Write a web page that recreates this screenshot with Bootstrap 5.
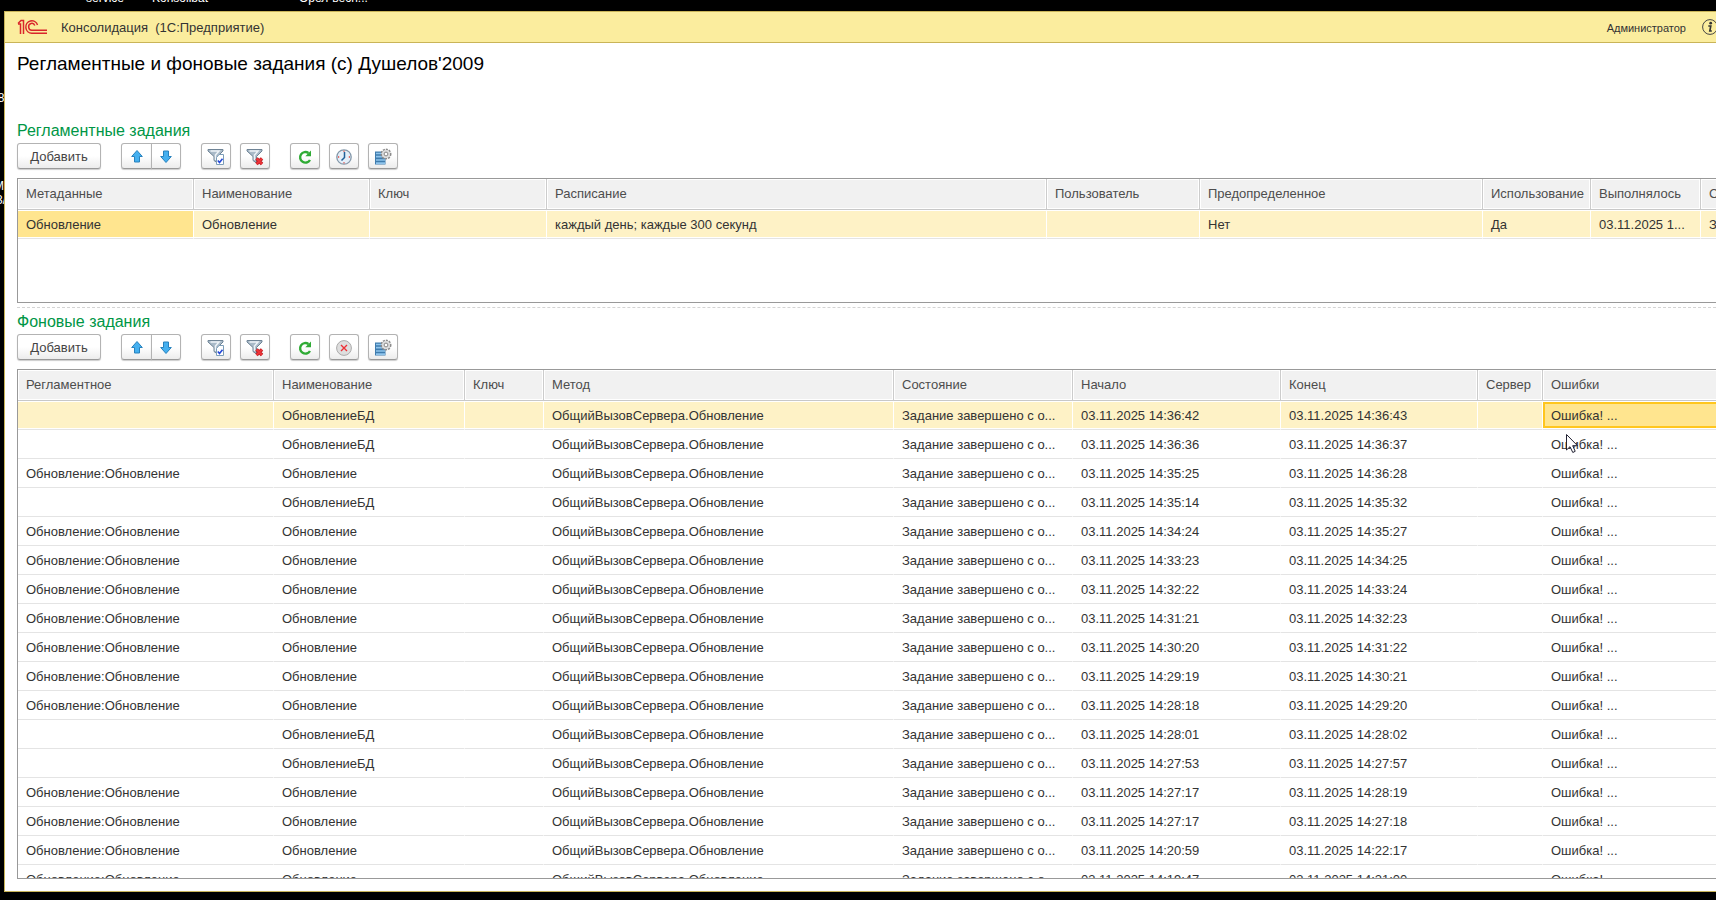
<!DOCTYPE html>
<html lang="ru">
<head>
<meta charset="utf-8">
<meta name="viewport" content="width=device-width, initial-scale=1">
<title>Консолидация (1С:Предприятие)</title>
<link href="https://cdn.jsdelivr.net/npm/bootstrap@5.3.0/dist/css/bootstrap.min.css" rel="stylesheet">
<style>
body{background:#000;font:13px/18px "Liberation Sans",Arial,sans-serif;color:#333;padding:11px 0 8px 4px}
.desk-label{position:absolute;color:#fff;font-size:12px;line-height:14px;white-space:nowrap}
.app-window{background:#fff;border:1px solid #c9b458;border-right:0;position:relative}
.titlebar{background:#fbed9e;border-bottom:1px solid #c9b458;height:31px;padding-left:12px;white-space:pre}
.app-name,.user-link{padding-top:2px}
.user-link{font-size:11px;color:#333;text-decoration:none}
.app-logo{margin-right:14px}
.info-btn{margin-right:-2px}
.workarea{padding:9px 0 12px 12px}
.form-title{font-size:19px;line-height:24px;font-weight:400;color:#000;margin:0 0 45px}
.group-title{font-size:16px;line-height:20px;font-weight:400;color:#009646;margin:0 0 2px}
.toolbar{margin-bottom:9px}
.tool{height:26px;width:30px;padding:1px 0 0;border:1px solid #b3b3b3;border-bottom-color:#999;border-radius:3px;background:linear-gradient(#fff 50%,#ececec);box-shadow:0 1px 1px #ccc;font-size:13px;line-height:18px;color:#444;display:inline-flex;align-items:center;justify-content:center}
.tool:hover,.tool:active{background:#f4f4f4!important;border-color:#999!important}
.tool-add{width:84px}
.btn-group .tool:first-child{width:31px}
.gap-tool{margin-left:9px}
.gap-group{margin-left:20px}
.grid-box{border:1px solid #999;border-right:0;overflow:hidden}
.grid-upper{height:125px}
.grid{table-layout:fixed;width:100%;border-collapse:separate;border-spacing:0;margin:0}
.grid th,.grid td{padding:2px 0 0 8px;white-space:nowrap;overflow:hidden;vertical-align:middle}
.grid th{height:31px;font-weight:400;color:#4d4d4d;background:#f1f1f1;border-right:1px solid #ccc;border-bottom:1px solid #c8c8c8;box-shadow:inset 0 0 0 1px #fff;padding-top:0}
.grid td{height:29px;border-bottom:1px solid #e4e4e4;border-right:1px solid #fff}
.grid th:last-child,.grid td:last-child{border-right:0}
.grid th:last-child{box-shadow:inset 1px 1px #fff,inset 0 -1px #fff}
.grid .current td{background:#fef2c6;box-shadow:inset 0 1px #fff,inset 0 -1px #fff}
.grid .current td.picked{background:#ffe58f}
.grid .current td.focused{box-shadow:inset 0 1px #fff,inset 0 -1px #fff,inset 2px 0 #ffc61e,inset 0 3px #ffc61e,inset 0 -3px #ffc61e}
.splitter{border-top:1px dashed #d4d4d4;margin:4px 0}
.pointer{position:absolute;left:1565px;top:433px}
</style>
</head>
<body class="vh-100 overflow-hidden d-flex flex-column position-relative">
<span class="desk-label" style="left:86px;top:-9px">service</span>
<span class="desk-label" style="left:152px;top:-9px">Konsolibat</span>
<span class="desk-label" style="left:299px;top:-9px">Орел-весн!..</span>
<span class="desk-label" style="left:-9px;top:91px">28</span>
<span class="desk-label" style="left:-6px;top:179px">M</span>
<span class="desk-label" style="left:-4px;top:193px">3/</span>

<svg class="d-none" aria-hidden="true">
  <symbol id="i-up" viewBox="0 0 16 16"><path d="M8 1.500 13.300 7.500H10.500V13H5.500V7.500H2.700Z" fill="#44b0f0" stroke="#2781bd"/></symbol>
  <symbol id="i-down" viewBox="0 0 16 16"><path d="M8 13.500 13.300 7.500H10.500V2H5.500V7.500H2.700Z" fill="#44b0f0" stroke="#2781bd"/></symbol>
  <symbol id="i-funnel" viewBox="0 0 18 18"><path d="M1 1.500H16V3L10.500 8.500V15L7 12.500V8.500L1 3Z" fill="#a9bac8" stroke="#6f8496"/><path d="M3.500 3H12L8.500 7V12" fill="none" stroke="#eef3f7" stroke-width="1.500"/></symbol>
  <symbol id="i-filter" viewBox="0 0 18 18"><use href="#i-funnel"/><path d="M9.500 9.500 12 6.500H16.500V16.500H9.500Z" fill="#fff" stroke="#7b9db8"/><path d="M10.800 12.500 12.500 14.500 15.500 10.800" fill="none" stroke="#2548d8" stroke-width="1.600"/></symbol>
  <symbol id="i-nofilter" viewBox="0 0 18 18"><use href="#i-funnel"/><path d="M10.500 10.500 16 16M16 10.500 10.500 16" stroke="#b81f24" stroke-width="3.400"/><path d="M10.500 10.500 16 16M16 10.500 10.500 16" stroke="#ee3338" stroke-width="1.800"/></symbol>
  <symbol id="i-refresh" viewBox="0 0 16 16"><path d="M13 11A5.300 5.300 0 1 1 11.500 4" fill="none" stroke="#2fab35" stroke-width="2.400"/><path d="M14 1.500V7.200H8.300Z" fill="#2fab35"/></symbol>
  <symbol id="i-clock" viewBox="0 0 16 16"><circle cx="8" cy="8" r="7.200" fill="#e4eff9" stroke="#8498aa" stroke-width="1.300"/><path d="M8.500 3V8.500L5.500 11.500" fill="none" stroke="#1f5f99" stroke-width="1.500"/><path d="M7.500 2.300h1M7.500 13.700h1M2 8h1.200M12.800 8h1.200" stroke="#e2473f" stroke-width="1.400"/></symbol>
  <symbol id="i-settings" viewBox="0 0 18 18"><path d="M1 3.500H11.500V16.500H1Z" fill="#3f7cae"/><path d="M2 5.500H11M2 8.700H11M2 12H11M2 15.200H11" stroke="#8fc4ec" stroke-width="1.700"/><circle cx="12" cy="6" r="4.600" fill="#ddd" stroke="#8c8c8c" stroke-width="1.800" stroke-dasharray="2 1"/><circle cx="12" cy="6" r="3.900" fill="#ddd"/><circle cx="12" cy="6" r="1.900" fill="#fff" stroke="#888"/></symbol>
  <symbol id="i-stop" viewBox="0 0 16 16"><circle cx="8" cy="8" r="7.400" fill="#dedede" stroke="#aaa"/><path d="M5 5 11 11M11 5 5 11" stroke="#ed2f35" stroke-width="1.400"/></symbol>
</svg>

<div class="app-window flex-grow-1 d-flex flex-column overflow-hidden">
  <header class="titlebar d-flex align-items-center flex-shrink-0"><svg class="app-logo" width="30" height="16" viewBox="0 0 30 16" role="img" aria-label="1С"><g fill="none" stroke="#d9252b" stroke-width="1.500"><path d="M1 5H3.500V15M1 4.500 4 1.500H6.500V15"/><path d="M20.500 6A6 6.200 0 1 0 15 14.200H30"/><path d="M17.800 6.500A3.200 3.500 0 1 0 15 11.300H30"/></g></svg><span class="app-name">Консолидация  (1С:Предприятие)</span><a href="#" class="user-link ms-auto">Администратор</a><button type="button" class="info-btn btn p-0 border-0 ms-3 d-flex flex-shrink-0" aria-label="О программе"><svg width="16" height="16" viewBox="0 0 16 16"><circle cx="8" cy="8" r="7.400" fill="none" stroke="#444"/><circle cx="8.700" cy="4.200" r="1.400" fill="#333"/><path d="M6.300 7H8.800L7.800 12H9.800" fill="none" stroke="#333" stroke-width="1.600"/></svg></button></header>

  <main class="workarea flex-grow-1 d-flex flex-column overflow-hidden">
    <h1 class="form-title">Регламентные и фоновые задания (с) Душелов'2009</h1>

    <h2 class="group-title">Регламентные задания</h2>
    <div class="toolbar d-flex flex-shrink-0" role="toolbar">
      <button type="button" class="btn tool tool-add">Добавить</button>
      <div class="btn-group mx-1 px-3">
        <button type="button" class="btn tool" aria-label="Вверх"><svg width="16" height="16"><use href="#i-up"/></svg></button>
        <button type="button" class="btn tool" aria-label="Вниз"><svg width="16" height="16"><use href="#i-down"/></svg></button>
      </div>
      <button type="button" class="btn tool" aria-label="Отбор"><svg width="18" height="18"><use href="#i-filter"/></svg></button>
      <button type="button" class="btn tool gap-tool" aria-label="Отключить отбор"><svg width="18" height="18"><use href="#i-nofilter"/></svg></button>
      <button type="button" class="btn tool gap-group" aria-label="Обновить"><svg width="16" height="16"><use href="#i-refresh"/></svg></button>
      <button type="button" class="btn tool gap-tool" aria-label="Расписание"><svg width="16" height="16"><use href="#i-clock"/></svg></button>
      <button type="button" class="btn tool gap-tool" aria-label="Настройка списка"><svg width="18" height="18"><use href="#i-settings"/></svg></button>
    </div>
    <div class="grid-box grid-upper flex-shrink-0">
      <table class="grid">
        <colgroup><col style="width:176px"><col style="width:176px"><col style="width:177px"><col style="width:500px"><col style="width:153px"><col style="width:283px"><col style="width:108px"><col style="width:110px"><col></colgroup>
        <thead><tr><th>Метаданные</th><th>Наименование</th><th>Ключ</th><th>Расписание</th><th>Пользователь</th><th>Предопределенное</th><th>Использование</th><th>Выполнялось</th><th>С</th></tr></thead>
        <tbody><tr class="current"><td class="picked">Обновление</td><td>Обновление</td><td></td><td>каждый день; каждые 300 секунд</td><td></td><td>Нет</td><td>Да</td><td>03.11.2025 1...</td><td>З</td></tr></tbody>
      </table>
    </div>

    <div class="splitter"></div>

    <h2 class="group-title">Фоновые задания</h2>
    <div class="toolbar d-flex flex-shrink-0" role="toolbar">
      <button type="button" class="btn tool tool-add">Добавить</button>
      <div class="btn-group mx-1 px-3">
        <button type="button" class="btn tool" aria-label="Вверх"><svg width="16" height="16"><use href="#i-up"/></svg></button>
        <button type="button" class="btn tool" aria-label="Вниз"><svg width="16" height="16"><use href="#i-down"/></svg></button>
      </div>
      <button type="button" class="btn tool" aria-label="Отбор"><svg width="18" height="18"><use href="#i-filter"/></svg></button>
      <button type="button" class="btn tool gap-tool" aria-label="Отключить отбор"><svg width="18" height="18"><use href="#i-nofilter"/></svg></button>
      <button type="button" class="btn tool gap-group" aria-label="Обновить"><svg width="16" height="16"><use href="#i-refresh"/></svg></button>
      <button type="button" class="btn tool gap-tool" aria-label="Отменить задание"><svg width="16" height="16"><use href="#i-stop"/></svg></button>
      <button type="button" class="btn tool gap-tool" aria-label="Настройка списка"><svg width="18" height="18"><use href="#i-settings"/></svg></button>
    </div>
    <div class="grid-box flex-grow-1">
      <table class="grid">
        <colgroup><col style="width:256px"><col style="width:191px"><col style="width:79px"><col style="width:350px"><col style="width:179px"><col style="width:208px"><col style="width:197px"><col style="width:65px"><col></colgroup>
        <thead><tr><th>Регламентное</th><th>Наименование</th><th>Ключ</th><th>Метод</th><th>Состояние</th><th>Начало</th><th>Конец</th><th>Сервер</th><th>Ошибки</th></tr></thead>
        <tbody id="jobs"></tbody>
      </table>
    </div>
  </main>
</div>

<svg class="pointer" width="14" height="22" viewBox="0 0 14 22" aria-hidden="true"><path d="M1.500 1.500V17L5 13.700 7.800 19.500 10.200 18.300 7.700 12.700H12.500Z" fill="#fff" stroke="#223"/></svg>

<script>
// [есть регламентное задание, начало, конец]
const jobs = [
  [0,'14:36:42','14:36:43'],[0,'14:36:36','14:36:37'],[1,'14:35:25','14:36:28'],[0,'14:35:14','14:35:32'],
  [1,'14:34:24','14:35:27'],[1,'14:33:23','14:34:25'],[1,'14:32:22','14:33:24'],[1,'14:31:21','14:32:23'],
  [1,'14:30:20','14:31:22'],[1,'14:29:19','14:30:21'],[1,'14:28:18','14:29:20'],[0,'14:28:01','14:28:02'],
  [0,'14:27:53','14:27:57'],[1,'14:27:17','14:28:19'],[1,'14:27:17','14:27:18'],[1,'14:20:59','14:22:17'],
  [1,'14:19:47','14:21:00']
];
document.getElementById('jobs').innerHTML = jobs.map(([scheduled, start, end], i) =>
  `<tr${i ? '' : ' class="current"'}><td>${scheduled ? 'Обновление:Обновление' : ''}</td><td>${scheduled ? 'Обновление' : 'ОбновлениеБД'}</td><td></td><td>ОбщийВызовСервера.Обновление</td><td>Задание завершено с о...</td><td>03.11.2025 ${start}</td><td>03.11.2025 ${end}</td><td></td><td${i ? '' : ' class="picked focused"'}>Ошибка! ...</td></tr>`).join('');
</script>
<script src="https://cdn.jsdelivr.net/npm/bootstrap@5.3.0/dist/js/bootstrap.bundle.min.js"></script>
</body>
</html>
